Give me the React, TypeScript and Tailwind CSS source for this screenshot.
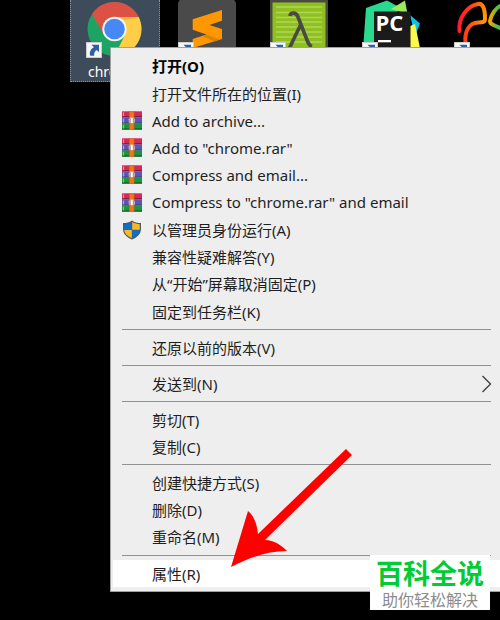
import React from 'react';

interface MenuEntry {
  label: string;
  icon?: 'archive' | 'shield';
  bold?: boolean;
  tall?: boolean;
  active?: boolean;
  submenu?: boolean;
}

const groups: MenuEntry[][] = [
  [
    { label: '打开(O)', bold: true, tall: true },
    { label: '打开文件所在的位置(I)' },
    { label: 'Add to archive...', icon: 'archive' },
    { label: 'Add to "chrome.rar"', icon: 'archive' },
    { label: 'Compress and email...', icon: 'archive' },
    { label: 'Compress to "chrome.rar" and email', icon: 'archive', tall: true },
    { label: '以管理员身份运行(A)', icon: 'shield' },
    { label: '兼容性疑难解答(Y)' },
    { label: '从“开始”屏幕取消固定(P)', tall: true },
    { label: '固定到任务栏(K)' },
  ],
  [{ label: '还原以前的版本(V)' }],
  [{ label: '发送到(N)', submenu: true }],
  [{ label: '剪切(T)' }, { label: '复制(C)' }],
  [{ label: '创建快捷方式(S)' }, { label: '删除(D)' }, { label: '重命名(M)', tall: true }],
  [{ label: '属性(R)', active: true }],
];

const ArchiveIcon = () => (
  <svg viewBox="0 0 20 19" className="w-5 h-[19px]" aria-hidden="true">
    <rect width="20" height="6" y="0.3" fill="#d5285a" />
    <rect width="20" height="1.5" y="5" fill="#8c1a3c" />
    <rect width="20" height="6" y="6.4" fill="#5a56b8" />
    <rect width="20" height="1" y="11.6" fill="#373374" />
    <rect width="20" height="6" y="12.6" fill="#16963f" />
    <rect width="20" height="1.2" y="17.4" fill="#0b5f26" />
    <path d="M1.5 1.2v4M1.5 7.4v4M1.5 13.6v4" stroke="#e9a33c" strokeWidth="1.2" />
    <rect x="7.2" width="5" height="18.6" y="0.2" fill="#ee741f" />
    <path d="M7.2 0v18.8M12.2 0v18.8" stroke="#b2501b" strokeWidth="0.5" />
    <path d="M6.800 11.8V8.200L8.200 6.600H11.400L12.800 8.200V11.8" fill="#d9c6be" />
    <path d="M8 11.5V7.4M11.6 11.5V7.4" stroke="#a06a5c" strokeWidth="0.7" />
    <rect x="9" y="7.2" width="1.7" height="5" fill="#fff" />
  </svg>
);

const ShieldIcon = () => (
  <svg viewBox="0 0 20 20" className="w-5 h-5" aria-hidden="true">
    <path d="M10 .5C7.500 2.400 4.500 3.100 1 3.100V9c0 4.900 3.800 8.400 9 10.600C15.200 17.400 19 13.900 19 9V3.100C15.500 3.100 12.500 2.400 10 .5Z" fill="#4c5a66" />
    <path d="M9.800 2C7.500 3.400 5 4.100 2.200 4.200V9.700H9.800Z" fill="#0f6fc8" />
    <path d="M10.200 2C12.500 3.400 15 4.100 17.800 4.200V9.700H10.200Z" fill="#fdb822" />
    <path d="M2.200 10.100H9.800V18.300C5.300 16.400 2.600 13.700 2.200 10.100Z" fill="#fdb822" />
    <path d="M17.800 10.100H10.200V18.300C14.700 16.400 17.400 13.700 17.800 10.100Z" fill="#0f6fc8" />
  </svg>
);

const ShortcutBadge = () => (
  <svg viewBox="0 0 16 16" className="absolute left-0 top-[42px] w-4 h-4" aria-hidden="true">
    <rect x="0.5" y="0.5" width="15" height="15" fill="#f6f6f6" stroke="#c9cdd1" />
    <path d="M5.500 2.800H13V10.200L10.800 8.100C8.600 9.500 7.800 11.200 8.200 13.800H4.300C3 10.200 4.700 7 7.900 5.200Z" fill="#2f5f9f" />
  </svg>
);

const ChromeIcon = () => (
  <svg viewBox="0 0 58 58" className="w-[58px] h-[58px]" aria-hidden="true">
    <circle cx="28.500" cy="29" r="27" fill="#1da462" />
    <path d="M28.500 17H52.700A27 27 0 0 1 28.500 56L38.900 35Z" fill="#ffcd46" />
    <path d="M5.900 14.200A27 27 0 0 1 52.700 17H28.500L18.100 35Z" fill="#dd5144" />
    <path d="M28.500 17H52.700L40 20Z" fill="#e9b53c" />
    <circle cx="28.500" cy="29" r="12.200" fill="#f4f4f4" />
    <circle cx="28.500" cy="29" r="10.300" fill="#4688f4" />
  </svg>
);

const SublimeIcon = () => (
  <svg viewBox="0 0 58 58" className="w-[58px] h-[58px]" aria-hidden="true">
    <rect y="-1" width="58" height="62" rx="5" fill="#4a4a4a" />
    <path d="M44 10V20.700L31.300 25L44 29V39L14.700 48V39L28.500 34.500L14.700 29.700V19.300Z" fill="#ff9800" />
    <path d="M28.500 34.500L42 39.600L36 41.500L24 36Z" fill="#dd8200" />
  </svg>
);

const LambdaIcon = () => (
  <svg viewBox="0 0 58 58" className="w-[58px] h-[58px]" aria-hidden="true">
    <rect y="-1" width="58" height="60" fill="#4a4a43" />
    <rect x="2.500" y="2.500" width="53" height="54" fill="#8fc01f" />
    <path d="M6 7H52M6 12.500H52M6 17.500H52M6 22H52M6 27H52M6 32H52M6 37H52M6 42H52" stroke="#b0d658" strokeWidth="1.300" />
    <path d="M20 16C20.500 12.500 26 11.500 28 17L37 40C38.500 44 40 46 42 46.500M30.500 25L19 49" fill="none" stroke="#4a4a43" strokeWidth="3.600" />
  </svg>
);

const PyCharmIcon = () => (
  <svg viewBox="0 0 58 58" className="w-[58px] h-[58px]" aria-hidden="true">
    <path d="M4 8L25 0.500L37 7L25 50H1Z" fill="#28d98f" />
    <path d="M29 9L43 0.500L45.500 14Z" fill="#9bea5b" />
    <path d="M48 15L58 23.500L53 36Z" fill="#07c3f2" />
    <path d="M48 26L53 24L58 48H48Z" fill="#fcf84a" />
    <rect x="12" y="11.500" width="36.500" height="40" fill="#1b1b1b" />
    <text x="13.500" y="31" fill="#fff" fontFamily="Open Sans, sans-serif" fontWeight="700" fontSize="22">PC</text>
    <rect x="16" y="40" width="13" height="2.300" fill="#fff" />
  </svg>
);

const BirdIcon = () => (
  <svg viewBox="0 0 58 58" className="w-[58px] h-[58px]" aria-hidden="true">
    <defs>
      <linearGradient id="wing" x1="0" y1="0" x2="1" y2="0.3">
        <stop offset="0" stopColor="#ff0a3a" />
        <stop offset="0.500" stopColor="#ff4a12" />
        <stop offset="1" stopColor="#ff9a00" />
      </linearGradient>
      <linearGradient id="feather" x1="0" y1="0" x2="1" y2="0">
        <stop offset="0" stopColor="#f7a300" />
        <stop offset="0.600" stopColor="#4fc04a" />
      </linearGradient>
    </defs>
    <path d="M5.500 31C4 18 13 6 24 4C29 3 31 9 31 19C31 22 29 22.500 24 22.500C16 23 10 30 11.500 43" fill="none" stroke="url(#wing)" strokeWidth="4" strokeLinecap="round" />
    <path d="M48 5C42 7 37 15 36 21C36 25 41 25 48 29" fill="none" stroke="url(#feather)" strokeWidth="4" />
  </svg>
);

const desktopIcons = [
  { name: 'chrome', Icon: ChromeIcon, selected: true },
  { name: 'sublime', Icon: SublimeIcon, selected: false },
  { name: 'cmder', Icon: LambdaIcon, selected: false },
  { name: 'pycharm', Icon: PyCharmIcon, selected: false },
  { name: 'navicat', Icon: BirdIcon, selected: false },
];

const MenuItem: React.FC<{ item: MenuEntry }> = ({ item }) => (
  <button
    type="button"
    role="menuitem"
    className={`flex w-full items-center pl-[9px] pr-2 text-left whitespace-nowrap ${item.tall ? 'h-7' : 'h-[27px]'} ${
      item.active ? 'bg-white' : ''
    } ${item.bold ? 'font-bold text-black' : ''}`}
  >
    <span className="w-[30px] shrink-0">
      {item.icon === 'archive' && <ArchiveIcon />}
      {item.icon === 'shield' && <ShieldIcon />}
    </span>
    <span className="flex-1">{item.label}</span>
    {item.submenu && (
      <svg viewBox="0 0 11 18" className="w-[11px] h-[18px]" aria-hidden="true">
        <path d="M1.500 1L9.500 9L1.500 17" fill="none" stroke="#3a3a44" strokeWidth="1.300" />
      </svg>
    )}
  </button>
);

export default function App() {
  return (
    <div lang="zh-CN" className="relative min-h-screen overflow-hidden bg-black font-['Noto_Sans','Noto_Sans_CJK_SC',sans-serif]">
      {/* Desktop shortcuts */}
      <div className="flex overflow-hidden pl-[70px]">
        {desktopIcons.map(({ name, Icon, selected }) => (
          <div key={name} className="w-[92px] shrink-0">
            <div
              className={`w-[90px] h-[82px] pl-[15px] border border-t-0 ${
                selected ? 'border-dotted border-[#8493a2] bg-[#3d4b5b]' : 'border-transparent'
              }`}
            >
              <div className="relative w-[58px]">
                <Icon />
                <ShortcutBadge />
              </div>
              {selected && <div className="pl-0.5 pt-0.5 text-sm leading-6 text-white">{name}</div>}
            </div>
          </div>
        ))}
      </div>

      {/* Context menu */}
      <div
        role="menu"
        className="absolute left-[110px] right-0 top-[47px] border border-r-0 border-[#a0a0a0] bg-[#eeeeee] py-1 pl-0.5 text-[15px] leading-5 text-[#1f1f1f]"
      >
        {groups.map((items, i) => (
          <React.Fragment key={i}>
            {i > 0 && <div role="separator" className="ml-[9px] mr-[9px] my-1 h-px bg-[#919191]" />}
            {items.map((item) => (
              <MenuItem key={item.label} item={item} />
            ))}
          </React.Fragment>
        ))}
      </div>

      {/* Pointer arrow */}
      <svg viewBox="0 0 122 120" className="absolute left-[231px] top-[448px] w-[122px] h-[120px]" aria-hidden="true">
        <path d="M0 119L17 63C23 68 26 76 27 86L115 1L121 7L34 92C43 92 50 97 56 103C36 103 17 110 0 119Z" fill="#ff0000" />
      </svg>

      {/* Brand mark */}
      <div className="absolute right-2.5 top-[555px] w-[120px] h-[55px] bg-white text-center font-['Noto_Sans_CJK_SC',sans-serif]">
        <div className="text-[27px] leading-9 font-bold text-[#00cc33]">百科全说</div>
        <div className="text-base leading-4 text-[#8c8c8c]">助你轻松解决</div>
      </div>
    </div>
  );
}
